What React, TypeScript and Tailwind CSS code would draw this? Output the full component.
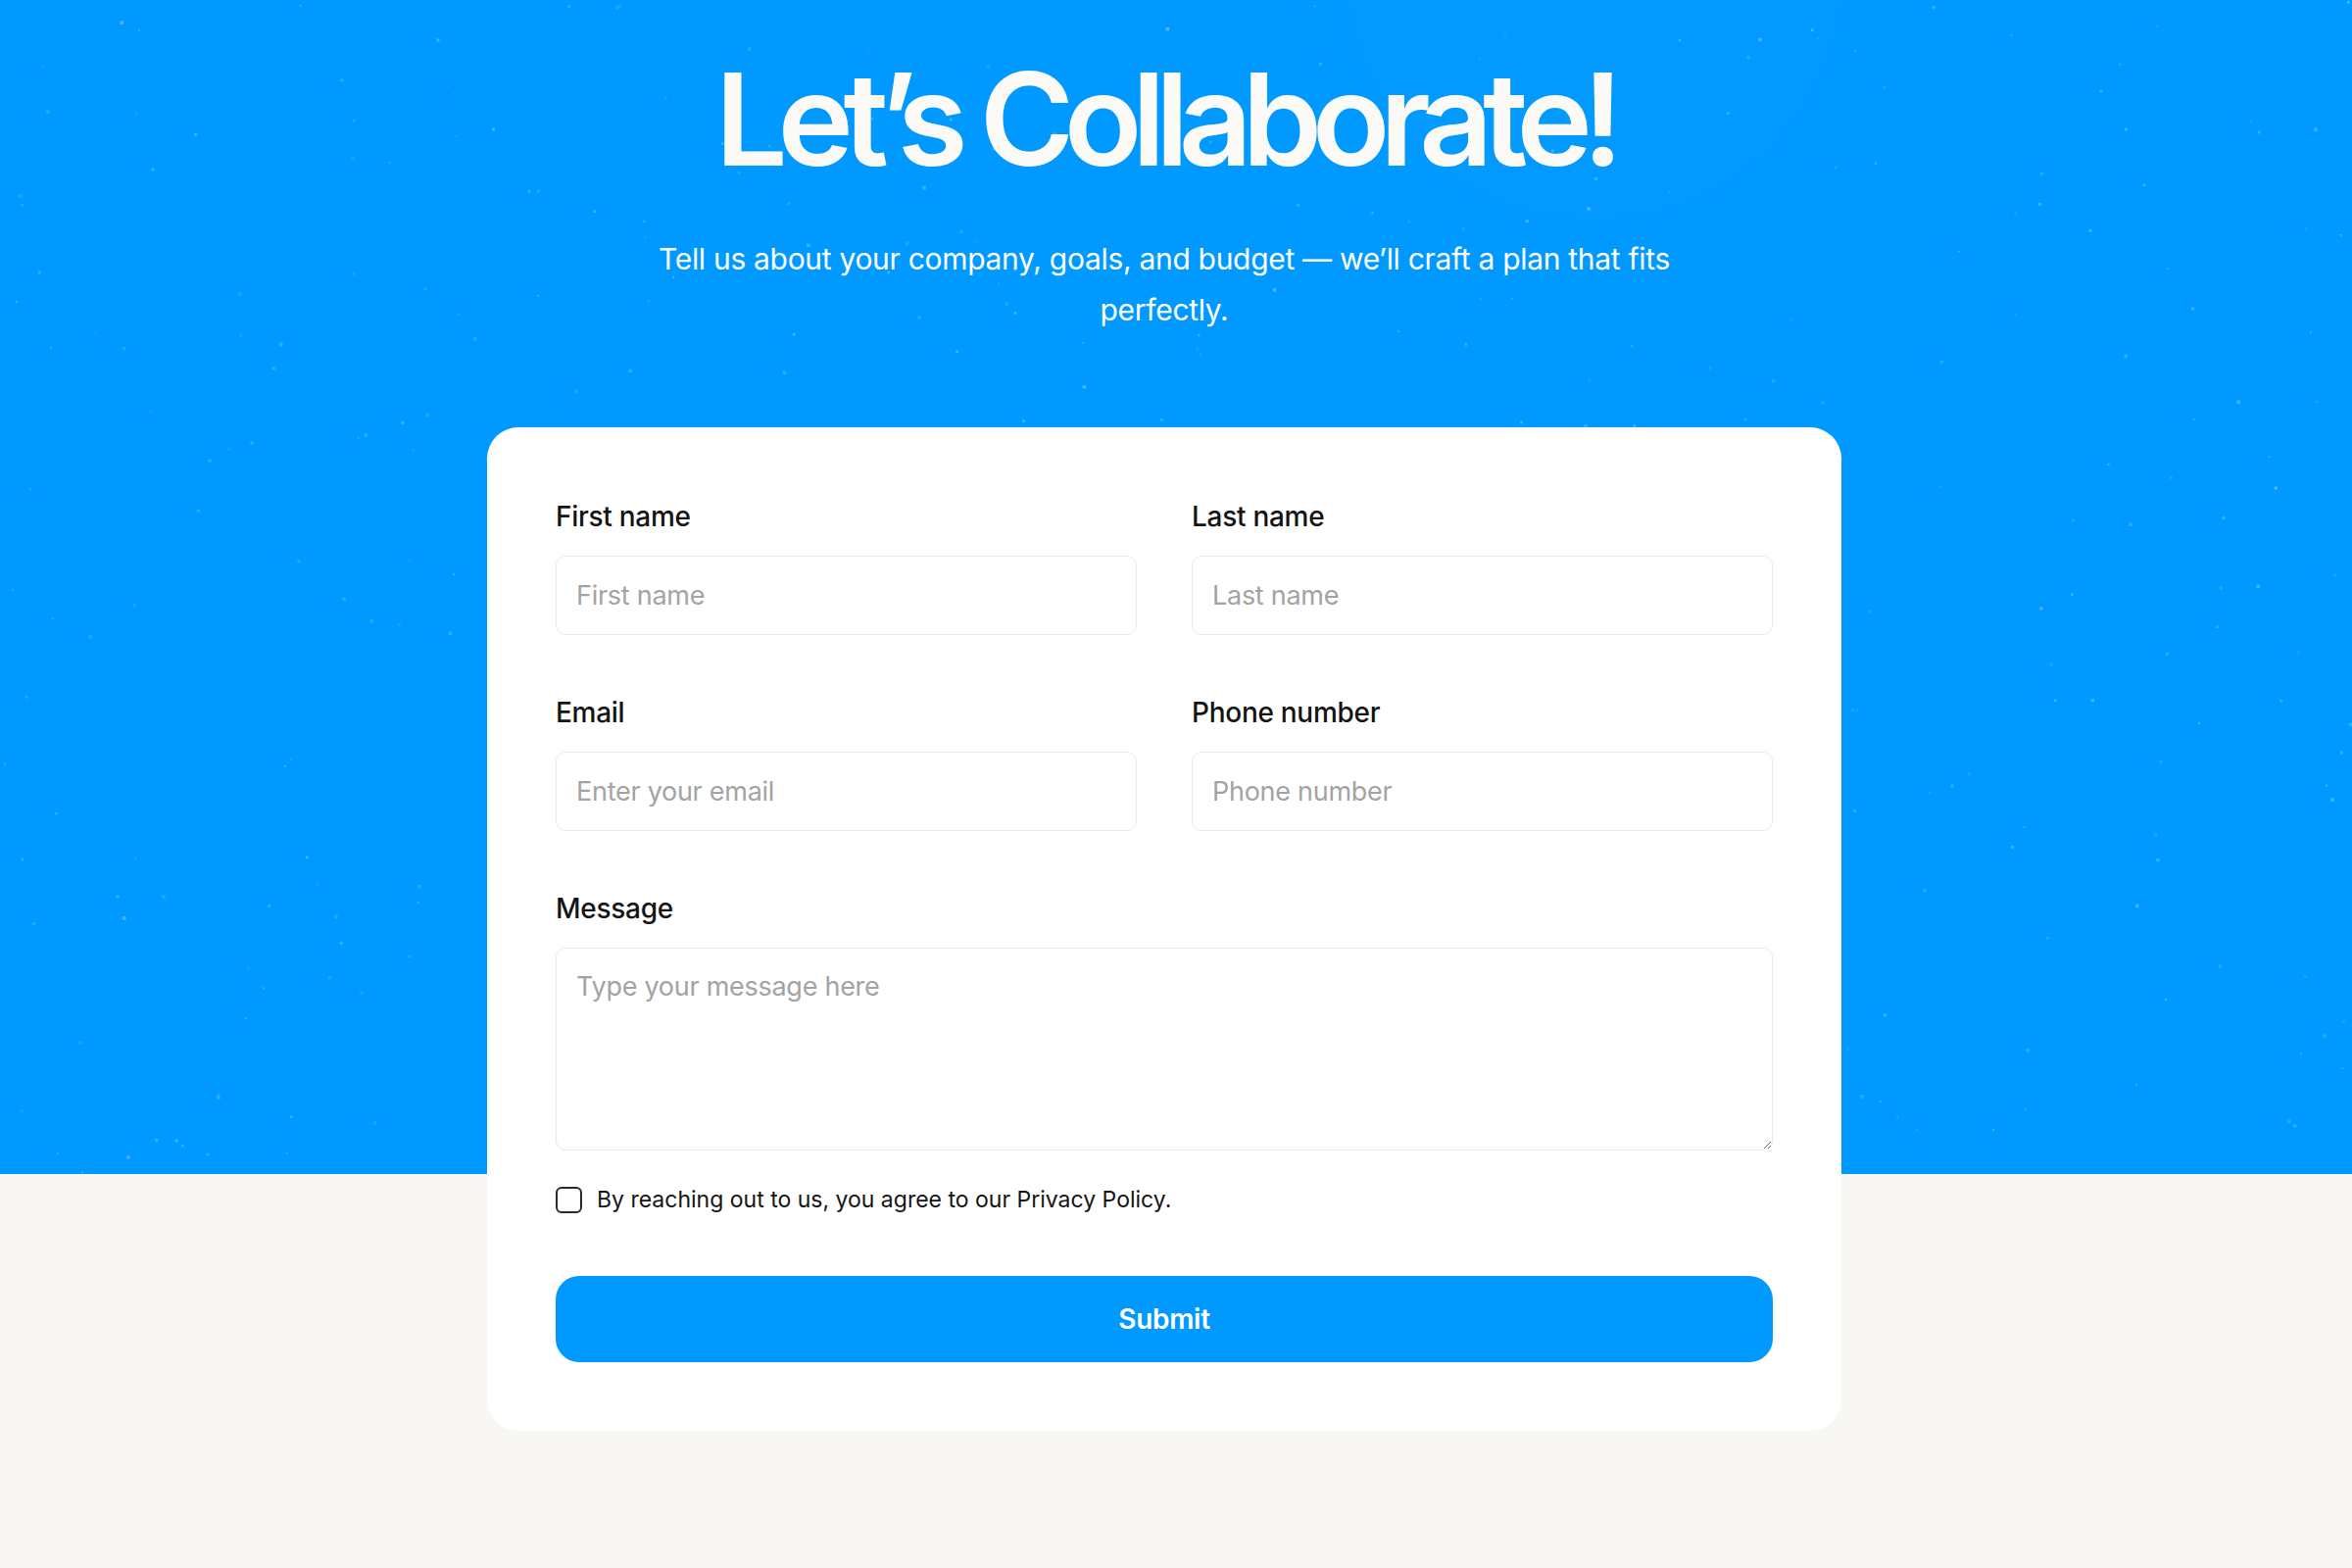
import React from "react";

function makeStars() {
  let seed = 1234567;
  const rand = () => {
    seed = (seed * 1103515245 + 12345) % 2147483648;
    return seed / 2147483648;
  };
  const stars: { x: number; y: number; r: number; o: number }[] = [];
  for (let i = 0; i < 420; i++) {
    stars.push({
      x: rand() * 2400,
      y: rand() * 1196,
      r: 0.8 + rand() * 1.1,
      o: 0.15 + rand() * 0.25,
    });
  }
  return stars;
}

const STARS = makeStars();

function Field({ label, placeholder }: { label: string; placeholder: string }) {
  return (
    <div className="flex flex-col">
      <label className="text-[28px] leading-[43px] font-medium text-[#141414] tracking-[-0.01em]">{label}</label>
      <input
        placeholder={placeholder}
        className="mt-[18px] h-[81px] w-full rounded-[10px] border border-[#e6e8eb] bg-white px-[20px] text-[27px] text-[#141414] placeholder:text-[#a3a3a3] outline-none tracking-[-0.01em]"
      />
    </div>
  );
}

export default function App() {
  return (
    <div
      className="relative min-h-[1600px] w-full overflow-hidden bg-[linear-gradient(to_bottom,#0099ff_0px,#0099ff_1198px,#f8f7f4_1198px)]"
      style={{ fontFamily: "Inter, 'Noto Sans', sans-serif" }}
    >
      <svg className="pointer-events-none absolute left-0 top-0" width="2400" height="1198" viewBox="0 0 2400 1198">
        <circle cx="1628" cy="-30" r="252" fill="rgba(255,255,255,0.012)" />
        {STARS.map((s, i) => (
          <rect key={i} x={s.x} y={s.y} width={s.r * 2} height={s.r * 2} fill={`rgba(190,225,255,${s.o})`} />
        ))}
      </svg>

      <div className="relative flex w-[2376px] flex-col items-center pt-[56px] pb-[140px]">
        <h1 className="text-[131px] leading-[131px] font-semibold tracking-[-0.08em] text-[#fbfaf7]">
          Let’s Collaborate!
        </h1>
        <p className="mt-[51px] max-w-[1100px] text-center text-[30px] leading-[52px] tracking-[-0.01em] text-white">
          Tell us about your company, goals, and budget — we’ll craft a plan that fits perfectly.
        </p>

        <div className="mt-[94px] w-[1382px] rounded-[32px] bg-white p-[70px]">
          <div className="grid grid-cols-2 gap-x-[56px] gap-y-[58px]">
            <Field label="First name" placeholder="First name" />
            <Field label="Last name" placeholder="Last name" />
            <Field label="Email" placeholder="Enter your email" />
            <Field label="Phone number" placeholder="Phone number" />
          </div>

          <div className="mt-[58px] flex flex-col">
            <label className="text-[28px] leading-[43px] font-medium text-[#141414] tracking-[-0.01em]">Message</label>
            <textarea
              placeholder="Type your message here"
              className="mt-[18px] h-[207px] w-full rounded-[10px] border border-[#e6e8eb] bg-white px-[20px] py-[20px] text-[27px] leading-[38px] text-[#141414] placeholder:text-[#a3a3a3] outline-none tracking-[-0.01em]"
            />
          </div>

          <div className="mt-[36px] flex items-center gap-[15px]">
            <span className="h-[27px] w-[27px] shrink-0 rounded-[6px] border-2 border-[#2a2a2a] bg-white" />
            <span className="text-[23px] leading-[28px] text-[#141414]">
              By reaching out to us, you agree to our Privacy Policy.
            </span>
          </div>

          <button className="mt-[64px] flex h-[88px] w-full items-center justify-center rounded-[24px] bg-[#0099ff] text-[28px] font-semibold text-white tracking-[-0.01em]">
            Submit
          </button>
        </div>
      </div>
    </div>
  );
}
